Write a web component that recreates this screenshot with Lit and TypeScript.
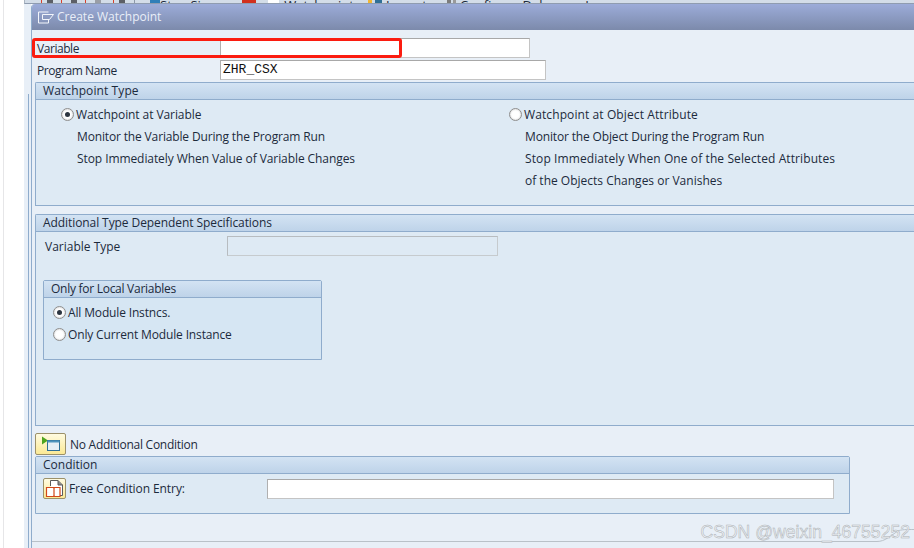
import { LitElement, html, css } from "lit";
import { customElement } from "lit/decorators.js";

const radio = (on: boolean) => html`<span class="radio ${on ? "on" : ""}"></span>`;

// Toolbar fragments left of the dialog's top edge: [gap before, width, colour]
const bits1: [number, number, string][] = [
  [16, 1, "#d8402c"], [5, 6, "#5c5f66"], [8, 1, "#d8402c"], [9, 6, "#5c5f66"], [8, 1, "#d8402c"],
  [9, 6, "#9a9ea6"], [12, 1, "#d8402c"], [5, 6, "#5c5f66"], [9, 1, "#8c98a8"], [15, 10, "#2f7fb8"],
];
const bits2: [number, number, string][] = [[0, 14, "#d2301e"], [12, 11, "#ffffff"]];
const bits3: [number, number, string][] = [[0, 4, "#f2b632"], [3, 7, "#2f6f96"]];
const bits4: [number, number, string][] = [[0, 4, "#7c7c7c"], [2, 3, "#9a9a9a"]];

const bits = (list: [number, number, string][]) =>
  list.map(([g, w, c]) => html`<b class="bit" style="margin-left:${g}px;width:${w}px;background:${c}"></b>`);

@customElement("app-root")
export class AppRoot extends LitElement {
  static styles = css`
    :host { display: block; width: 914px; height: 548px; overflow: hidden; background: #fff;
      font-family: "Open Sans", "Liberation Sans", sans-serif; font-size: 12px; color: #1c2a3c; }
    .page { display: flex; width: 914px; height: 548px; }
    .gutter { width: 24px; flex: none; box-sizing: border-box; padding-left: 3px; }
    .gutter i { display: block; width: 1px; height: 100%; background: #e6e6e8; }
    .stage { flex: 1; min-width: 0; display: flex; flex-direction: column; }
    .toolbar { height: 4px; flex: none; box-sizing: border-box; overflow: hidden; background: #d3dde8; display: flex; font-size: 13px; line-height: 11px; color: #1c2a3c; border-left: 1px solid #a9b4c0; border-bottom: 1px solid #8f9cb0; }
    .toolbar span { white-space: nowrap; flex: none; }
    .bit { display: block; flex: none; height: 3px; }
    .t1b { margin-left: 28px; }
    .t2 { margin-left: 5px; }
    .t3b { margin-left: 14px; }
    .t3 { margin-left: 4px; }
    .t4b { margin-left: 20px; }
    .t4 { margin-left: 4px; }
    .under { flex: 1; display: flex; min-height: 0; }
    .rail { width: 7px; flex: none; background: #e8eff7; box-sizing: border-box; padding: 90px 0 0 4px; }
    .rail i { display: block; width: 1px; height: 100%; background: #8faccc; }
    .dialog { flex: 1; min-width: 0; position: relative; overflow: hidden; background: #e8eff7; border-top-left-radius: 4px; border-left: 1px solid #8faccc; box-sizing: border-box; }
    .title { height: 26px; display: flex; align-items: center; gap: 3px; padding-left: 6px;
      background: linear-gradient(#9cacd9, #7c8aab); color: #e9eef8; font-size: 12px; line-height: 24px; }
    .content { padding: 8px 0 0 3px; margin-right: -3px; display: flex; flex-direction: column; }
    .row { display: grid; grid-template-columns: 185px auto; align-items: center; height: 20px; position: relative; }
    .row + .row { margin-top: 2px; }
    .lbl { padding-left: 2px; }
    .input { box-sizing: border-box; height: 20px; background: #fff; border: 1px solid #c4c4c4; border-top-color: #a8a8a8; border-left-color: #b0b0b0; font-family: "Liberation Mono", monospace; font-size: 13px; line-height: 18px; padding-left: 2px; color: #111; }
    .w1 { width: 310px; } .w2 { width: 326px; } .w3 { width: 271px; background: #deeaf4; border-color: #b7bcc0 #c6cbce #c6cbce #b7bcc0; }
    .w4 { width: 567px; }
    .mark { position: absolute; left: -3px; top: 0; width: 370px; height: 20px; box-sizing: border-box; border: 3px solid #fb1c10; border-radius: 3px; pointer-events: none; }
    .group { border: 1px solid #8faccc; background: #deeaf4; box-sizing: border-box; border-radius: 2px 2px 0 0; }
    .ghead { height: 16px; line-height: 15px; padding-left: 7px; background: linear-gradient(#d3e3f3, #bed3e9); border-bottom: 1px solid #8faccc; }
    .open { border-right: 0; }
    .g1 { height: 124px; margin-top: 2px; }
    .g2 { height: 212px; margin-top: 8px; }
    .cols { display: grid; grid-template-columns: 448px auto; padding: 3px 0 0 25px; }
    .line { height: 22px; display: flex; align-items: center; padding-left: 16px; white-space: nowrap; }
    .line.r { padding-left: 0; }
    .radio { width: 13px; height: 13px; box-sizing: border-box; flex: none; border-radius: 50%; border: 1px solid #8d8d8d; background: #fff; margin-right: 2px; position: relative; box-shadow: inset 0 0 2px #bbb; }
    .radio.on::after { content: ""; position: absolute; left: 3px; top: 3px; width: 5px; height: 5px; border-radius: 50%; background: #2c3540; }
    .vt { display: grid; grid-template-columns: 182px auto; align-items: center; height: 20px; margin: 4px 0 0 0; padding-left: 9px; }
    .sub { width: 279px; height: 80px; margin: 24px 0 0 7px; background: #d6e6f3; }
    .sub .list { padding: 3px 0 0 9px; }
    .cond-btn { display: flex; align-items: center; gap: 4px; height: 22px; margin-top: 7px; }
    .btn { box-sizing: border-box; flex: none; display: flex; align-items: center; justify-content: center; border: 1px solid #9c916a; border-radius: 2px; background: linear-gradient(#fffbe0, #fbe995); }
    .b1 { width: 31px; height: 22px; }
    .b2 { width: 23px; height: 21px; }
    .g3 { width: 815px; height: 58px; margin-top: 1px; }
    .frow { display: flex; align-items: center; padding: 4px 0 0 7px; }
    .frow .flabel { width: 201px; box-sizing: border-box; padding-left: 3px; }
    .scribble { position: absolute; left: 0; bottom: 0; width: 883px; height: 24px; pointer-events: none; }
    .wm { position: absolute; right: 4px; bottom: 5px; font-family: "Liberation Sans", sans-serif; font-size: 17.6px; color: #eef1f4; -webkit-text-stroke: 0.5px #abb0b5; white-space: nowrap; }
    .tight1 { letter-spacing: -0.08px; }
    .tight2 { letter-spacing: -0.15px; }
    .tight3 { letter-spacing: -0.27px; }
    .tight4 { letter-spacing: -0.45px; }
    .loose { letter-spacing: 0.1px; }
  `;

  render() {
    return html`<div class="page">
      <div class="gutter"><i></i></div>
      <div class="stage">
        <div class="toolbar">
          ${bits(bits1)}<span>Step Size</span>
          <b class="t1b"></b>${bits(bits2)}<span class="t2">Watchpoint</span>
          <b class="t3b"></b>${bits(bits3)}<span class="t3">Layout</span>
          <b class="t4b"></b>${bits(bits4)}<span class="t4">Configure Debugger Layer</span>
        </div>
        <div class="under">
          <div class="rail"><i></i></div>
          <div class="dialog">
            <div class="title">
              <svg width="16" height="13" viewBox="0 0 16 13" fill="none" stroke="#f2f5fb" stroke-width="1"><path d="M10.500 1H0.500V12H10.500V8.500"/><path d="M4.500 3.500H15.500L11.500 8.500H4.500Z"/></svg>
              Create Watchpoint
            </div>
            <div class="content">
              <div class="row"><span class="lbl tight4">Variable</span><span class="input w1"></span><span class="mark"></span></div>
              <div class="row"><span class="lbl tight4">Program Name</span><span class="input w2">ZHR_CSX</span></div>
              <section class="group open g1">
                <div class="ghead loose">Watchpoint Type</div>
                <div class="cols">
                  <div>
                    <div class="line r tight1">${radio(true)}Watchpoint at Variable</div>
                    <div class="line tight2">Monitor the Variable During the Program Run</div>
                    <div class="line tight1">Stop Immediately When Value of Variable Changes</div>
                  </div>
                  <div>
                    <div class="line r loose">${radio(false)}Watchpoint at Object Attribute</div>
                    <div class="line tight2">Monitor the Object During the Program Run</div>
                    <div class="line loose">Stop Immediately When One of the Selected Attributes</div>
                    <div class="line">of the Objects Changes or Vanishes</div>
                  </div>
                </div>
              </section>
              <section class="group open g2">
                <div class="ghead tight1">Additional Type Dependent Specifications</div>
                <div class="vt"><span>Variable Type</span><span class="input w3"></span></div>
                <section class="group sub">
                  <div class="ghead tight3">Only for Local Variables</div>
                  <div class="list">
                    <div class="line r tight2">${radio(true)}All Module Instncs.</div>
                    <div class="line r tight2">${radio(false)}Only Current Module Instance</div>
                  </div>
                </section>
              </section>
              <div class="cond-btn">
                <span class="btn b1"><svg width="20" height="16" viewBox="0 0 20 16"><path d="M1 0.500L7 4.500L1 8.500Z" fill="#4fa51f"/><rect x="6.500" y="4.500" width="12" height="10" fill="#e6eef5" stroke="#2f6f96"/><rect x="6.500" y="4.500" width="12" height="2" fill="#4f93bd"/></svg></span>
                <span class="tight3">No Additional Condition</span>
              </div>
              <section class="group g3">
                <div class="ghead">Condition</div>
                <div class="frow">
                  <span class="btn b2"><svg width="19" height="18" viewBox="0 0 19 18" fill="none"><path d="M5.500 6V0.500H13L17.500 5V15.500H14" fill="#fff" stroke="#5a5a5a"/><path d="M13 0.500V5H17.500" fill="#8d8d8d" stroke="#5a5a5a"/><path d="M1.500 7.500H8.500L9 8.500L9.500 7.500H15V16.500H9.500L9 15.500L8.500 16.500H1.500Z M9 8.500V15.500" fill="#fff" stroke="#d2481a" stroke-width="1.200"/></svg></span>
                  <span class="flabel tight1">Free Condition Entry:</span>
                  <span class="input w4"></span>
                </div>
              </section>
            </div>
            <svg class="scribble" viewBox="0 0 883 24" fill="none" stroke="#b9c1c8"><path d="M0 17.500H845C853 17.500 858 12 866 7C869 5.500 874 5.500 883 5.500"/></svg>
            <div class="wm">CSDN @weixin_46755252</div>
          </div>
        </div>
      </div>
    </div>`;
  }
}
